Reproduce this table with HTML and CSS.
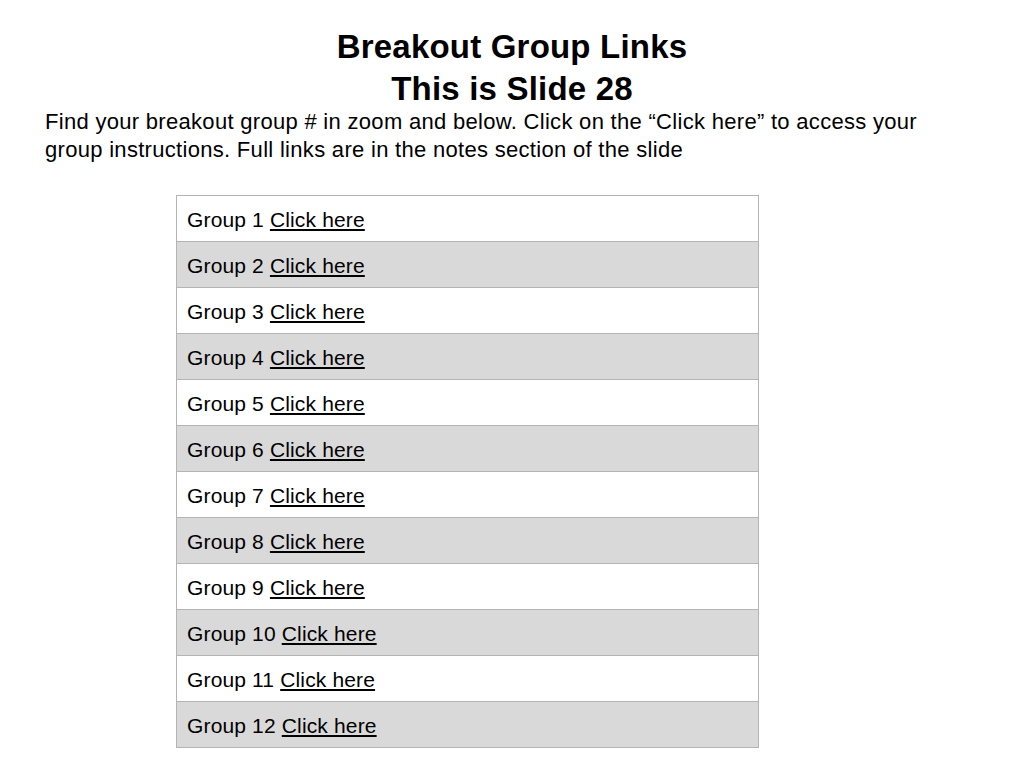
FILE: index.html
```html
<!DOCTYPE html>
<html>
<head>
<meta charset="utf-8">
<link rel="stylesheet" href="styles.css">
</head>
<body>
<div class="slide">
  <h1 class="title">Breakout Group Links<br>This is Slide 28</h1>
  <p class="intro">Find your breakout group # in zoom and below. Click on the “Click here” to access your group instructions. Full links are in the notes section of the slide</p>
  <table class="groups">
    <tr><td>Group 1 <a href="#">Click here</a></td></tr>
    <tr class="alt"><td>Group 2 <a href="#">Click here</a></td></tr>
    <tr><td>Group 3 <a href="#">Click here</a></td></tr>
    <tr class="alt"><td>Group 4 <a href="#">Click here</a></td></tr>
    <tr><td>Group 5 <a href="#">Click here</a></td></tr>
    <tr class="alt"><td>Group 6 <a href="#">Click here</a></td></tr>
    <tr><td>Group 7 <a href="#">Click here</a></td></tr>
    <tr class="alt"><td>Group 8 <a href="#">Click here</a></td></tr>
    <tr><td>Group 9 <a href="#">Click here</a></td></tr>
    <tr class="alt"><td>Group 10 <a href="#">Click here</a></td></tr>
    <tr><td>Group 11 <a href="#">Click here</a></td></tr>
    <tr class="alt"><td>Group 12 <a href="#">Click here</a></td></tr>
  </table>
</div>
</body>
</html>
```

FILE: styles.css
```css
html, body {
  margin: 0;
  padding: 0;
  background: #fff;
}
body {
  font-family: "Liberation Sans", Arial, sans-serif;
  color: #000;
}
.slide {
  width: 1024px;
  height: 768px;
  padding-top: 26px;
  box-sizing: border-box;
}
.title {
  margin: 0;
  text-align: center;
  font-size: 33px;
  font-weight: bold;
  line-height: 42px;
  letter-spacing: 0.2px;
}
.intro {
  margin: -2px 0 0 45px;
  width: 900px;
  font-size: 22px;
  line-height: 28px;
  letter-spacing: 0.3px;
}
.groups {
  margin: 31px 0 0 176px;
  width: 583px;
  border-collapse: collapse;
}
.groups td {
  height: 46px;
  box-sizing: border-box;
  padding: 2px 0 0 10px;
  border: 1px solid #b4b4b4;
  font-size: 21px;
  letter-spacing: 0.15px;
  background: #fff;
}
.groups tr.alt td {
  background: #d9d9d9;
}
.groups a {
  color: #000;
  text-decoration: underline;
}
```
